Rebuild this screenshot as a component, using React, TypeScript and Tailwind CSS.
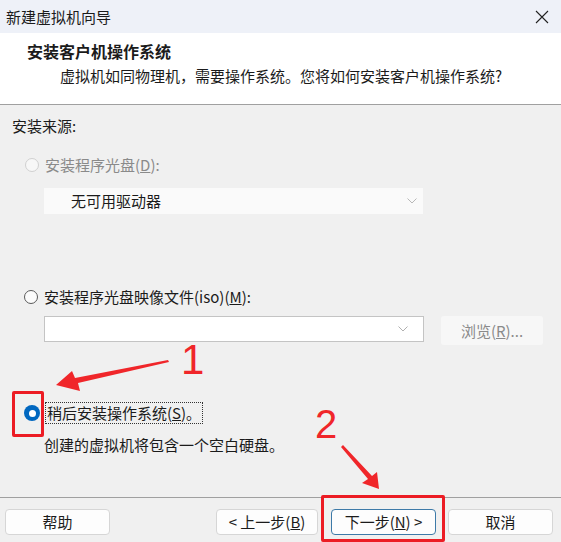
const font = { fontFamily: '"Noto Sans CJK SC", "Noto Sans", sans-serif' };

function Radio({ state }: { state: "off" | "disabled" | "on" }) {
  if (state === "on") {
    return (
      <span className="flex h-[16px] w-[16px] items-center justify-center rounded-full bg-[#0067c0]">
        <span className="h-[7px] w-[7px] rounded-full bg-white" />
      </span>
    );
  }
  return (
    <span
      className={
        state === "disabled"
          ? "h-[14px] w-[14px] rounded-full border border-[#d0d0d0] bg-[#f7f7f7]"
          : "h-[14px] w-[14px] rounded-full border border-[#5a5a5a] bg-[#fbfbfb]"
      }
    />
  );
}

function Chevron({ color }: { color: string }) {
  return (
    <svg width="10" height="6" viewBox="0 0 10 6" fill="none">
      <path d="M0.5 0.5 L5 5 L9.5 0.5" stroke={color} strokeWidth="1" />
    </svg>
  );
}

function Btn({ children, primary, w }: { children: React.ReactNode; primary?: boolean; w: string }) {
  return (
    <div
      className={
        (primary
          ? "flex h-[26px] items-center justify-center rounded-[4px] border border-[#3d7aa8] bg-[#fdfdfd] text-[15px] text-[#1b1b1b] "
          : "flex h-[26px] items-center justify-center rounded-[4px] border border-[#d6d6d6] bg-[#fdfdfd] text-[15px] text-[#1b1b1b] ") + w
      }
    >
      {children}
    </div>
  );
}

export default function App() {
  return (
    <div className="relative flex h-[542px] w-[561px] flex-col overflow-hidden bg-[#f0f0f0] text-[#1b1b1b]" style={font}>
      {/* title bar */}
      <div className="flex h-[33px] items-center justify-between bg-[#eef1f8] pl-[6px] pr-[12px]">
        <span className="text-[15px] leading-none">新建虚拟机向导</span>
        <svg width="14" height="14" viewBox="0 0 14 14">
          <path d="M1 1 L13 13 M13 1 L1 13" stroke="#222" strokeWidth="1.1" />
        </svg>
      </div>

      {/* header */}
      <div className="h-[72px] border-b border-[#a0a0a0] bg-white pl-[27px] pt-[7px]">
        <div className="text-[16px] font-bold leading-[22px]">安装客户机操作系统</div>
        <div className="mt-[4px] pl-[33px] text-[15px] leading-[20px]">虚拟机如同物理机，需要操作系统。您将如何安装客户机操作系统?</div>
      </div>

      {/* body */}
      <div className="flex flex-col pl-[12px] text-[15px] leading-[20px]">
        <div className="mt-[11px]">安装来源:</div>

        <div className="mt-[19px] flex items-center gap-[6px] pl-[13px] text-[#8a8a8a]">
          <Radio state="disabled" />
          <span>安装程序光盘(<span className="underline">D</span>):</span>
        </div>
        <div className="ml-[32px] mt-[13px] flex h-[26px] w-[379px] items-center justify-between bg-[#fafafa] pl-[27px] pr-[6px] text-[#1b1b1b]">
          <span>无可用驱动器</span>
          <Chevron color="#b8b8b8" />
        </div>

        <div className="mt-[73px] flex items-center gap-[6px] pl-[12px]">
          <Radio state="off" />
          <span>安装程序光盘映像文件(iso)(<span className="underline">M</span>):</span>
        </div>
        <div className="ml-[32px] mt-[9px] flex items-start gap-[17px]">
          <div className="flex h-[26px] w-[380px] items-center justify-end border border-[#c4c4c4] bg-white pr-[8px]">
            <div className="flex h-full w-[24px] items-center justify-center">
              <Chevron color="#b0b0b0" />
            </div>
          </div>
          <div className="flex h-[29px] w-[102px] items-center justify-center rounded-[3px] bg-[#f7f7f7] text-[#8a8a8a]">
            浏览(<span className="underline">R</span>)...
          </div>
        </div>

        <div className="mt-[57px] flex items-center gap-[5px] pl-[12px]">
          <Radio state="on" />
          <span className="border border-dotted border-[#333] px-[1px]">稍后安装操作系统(<span className="underline">S</span>)。</span>
        </div>
        <div className="ml-[32px] mt-[11px]">创建的虚拟机将包含一个空白硬盘。</div>
      </div>

      {/* footer */}
      <div className="mt-auto flex h-[45px] items-start border-t border-[#a0a0a0] pl-[5px] pr-[8px] pt-[11px]">
        <Btn w="w-[105px]">帮助</Btn>
        <div className="ml-auto flex gap-[13px]">
          <Btn w="w-[102px]">&lt; 上一步(<span className="underline">B</span>)</Btn>
          <div className="flex gap-[12px]">
            <Btn primary w="w-[105px]">下一步(<span className="underline">N</span>) &gt;</Btn>
            <Btn w="w-[105px]">取消</Btn>
          </div>
        </div>
      </div>

      {/* annotations */}
      <div className="absolute left-[12px] top-[391px] h-[46px] w-[32px] rounded-[2px] border-[3px] border-[#ec1c24]" />
      <div className="absolute left-[321px] top-[495px] h-[47px] w-[124px] rounded-[2px] border-[3px] border-[#ec1c24]" />
      <div className="absolute left-[181px] top-[339px] text-[42px] leading-none text-[#f0262a]" style={{ fontFamily: '"Liberation Sans", sans-serif' }}>1</div>
      <div className="absolute left-[315px] top-[404px] text-[40px] leading-none text-[#f0262a]" style={{ fontFamily: '"Liberation Sans", sans-serif' }}>2</div>
      <svg className="absolute left-0 top-0" width="561" height="542" viewBox="0 0 561 542">
        <polygon points="168,360 169,362 78,383 80,391 56,385 72,371 75,378" fill="#f0262a" />
        <polygon points="341,447 343,445 372,476 377,472 379,489 362,483 368,479" fill="#f0262a" />
      </svg>
    </div>
  );
}
